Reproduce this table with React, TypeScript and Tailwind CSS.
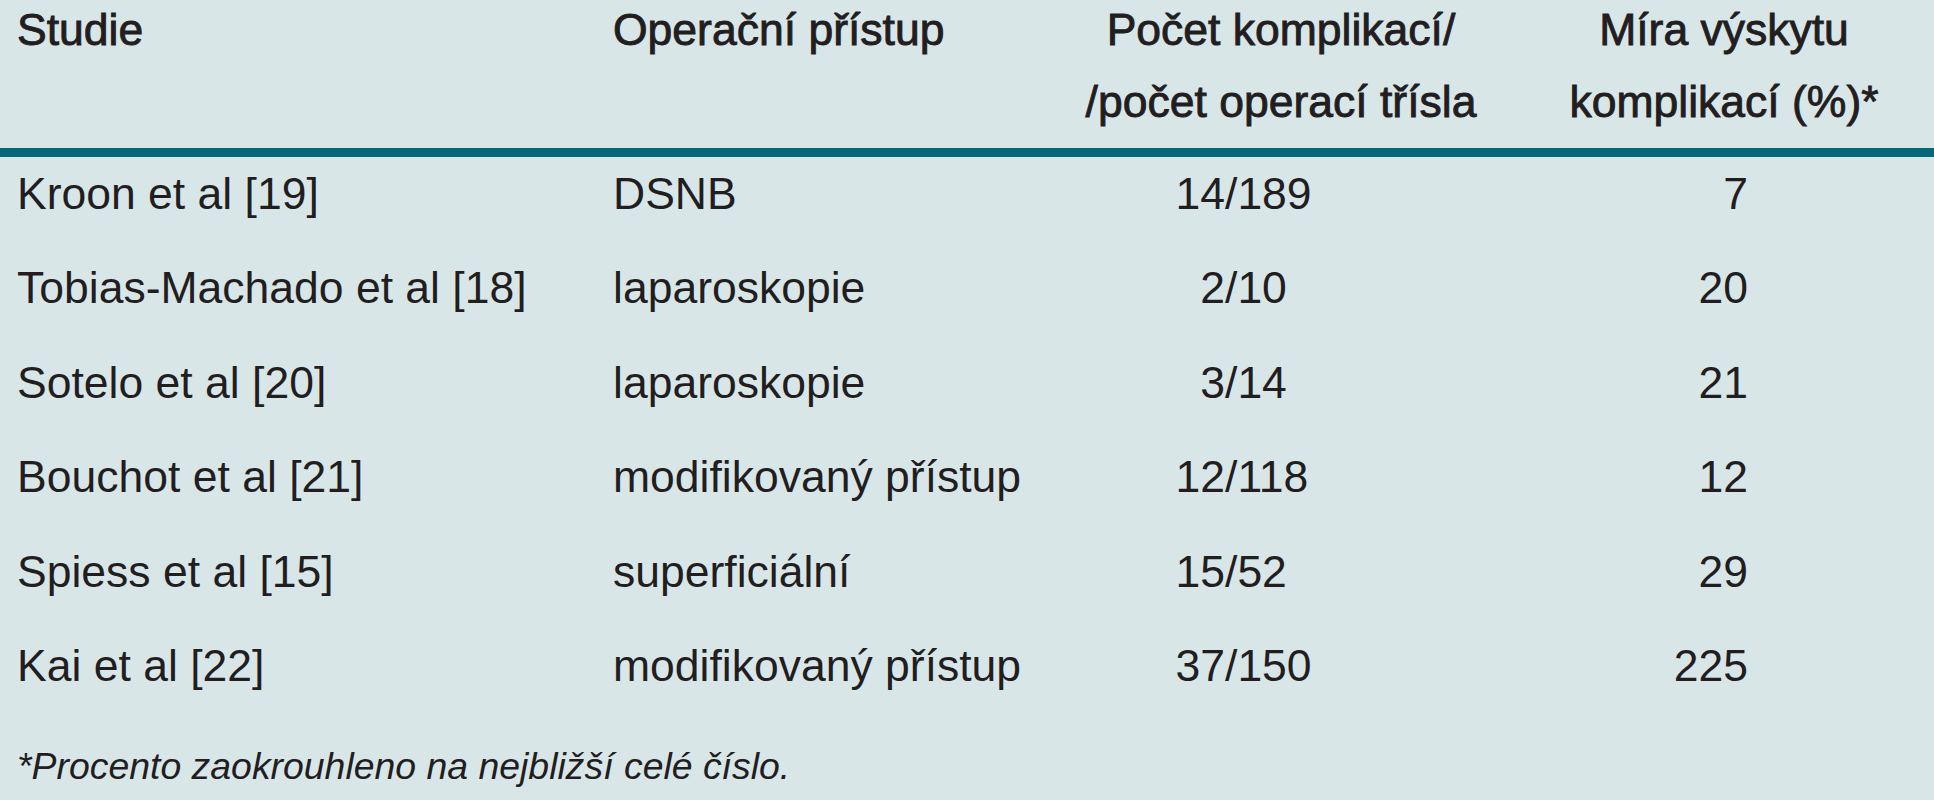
import React from "react";

const rows = [
  { s: "Kroon et al [19]", p: "DSNB", n: "14", d: "189", r: "7" },
  { s: "Tobias-Machado et al [18]", p: "laparoskopie", n: "2", d: "10", r: "20" },
  { s: "Sotelo et al [20]", p: "laparoskopie", n: "3", d: "14", r: "21" },
  { s: "Bouchot et al [21]", p: "modifikovaný přístup", n: "12", d: "118", r: "12" },
  { s: "Spiess et al [15]", p: "superficiální", n: "15", d: "52", r: "29" },
  { s: "Kai et al [22]", p: "modifikovaný přístup", n: "37", d: "150", r: "225" },
];

export default function App() {
  return (
    <div className="w-full min-h-[800px] overflow-hidden bg-[#d9e6e8] text-[#221e1f] font-['Liberation_Sans',Arial,sans-serif]">
      {/* header */}
      <div className="flex pl-[17px] text-[44.5px] whitespace-nowrap [-webkit-text-stroke:0.9px_#221e1f]">
        <div className="w-[596px] leading-[60px]">Studie</div>
        <div className="w-[462px] leading-[60px]">Operační přístup</div>
        <div className="w-[412px] flex flex-col items-center">
          <div className="leading-[60px]">Počet komplikací/</div>
          <div className="leading-[60px] mt-[12px]">/počet operací třísla</div>
        </div>
        <div className="ml-[39px] w-[396px] flex flex-col items-center">
          <div className="leading-[60px]">Míra výskytu</div>
          <div className="leading-[60px] mt-[12px]">komplikací (%)*</div>
        </div>
      </div>
      <div className="mt-[16px] h-[9px] bg-[#046876]" />
      {/* body */}
      <div className="text-[44.5px] whitespace-nowrap">
        {rows.map((r, i) => (
          <div key={i} className="flex h-[94.5px] pt-[11.6px] pl-[17px] leading-[50px]">
            <div className="w-[596px]">{r.s}</div>
            <div className="w-[500px]">{r.p}</div>
            <div className="w-[287px] flex">
              <span className="w-[112px] text-right">{r.n}</span>
              <span>/{r.d}</span>
            </div>
            <div className="w-[348px] text-right">{r.r}</div>
          </div>
        ))}
      </div>
      <div className="mt-[19.8px] pl-[17px] text-[37.4px] italic leading-[44px] whitespace-nowrap">
        *Procento zaokrouhleno na nejbližší celé číslo.
      </div>
    </div>
  );
}
